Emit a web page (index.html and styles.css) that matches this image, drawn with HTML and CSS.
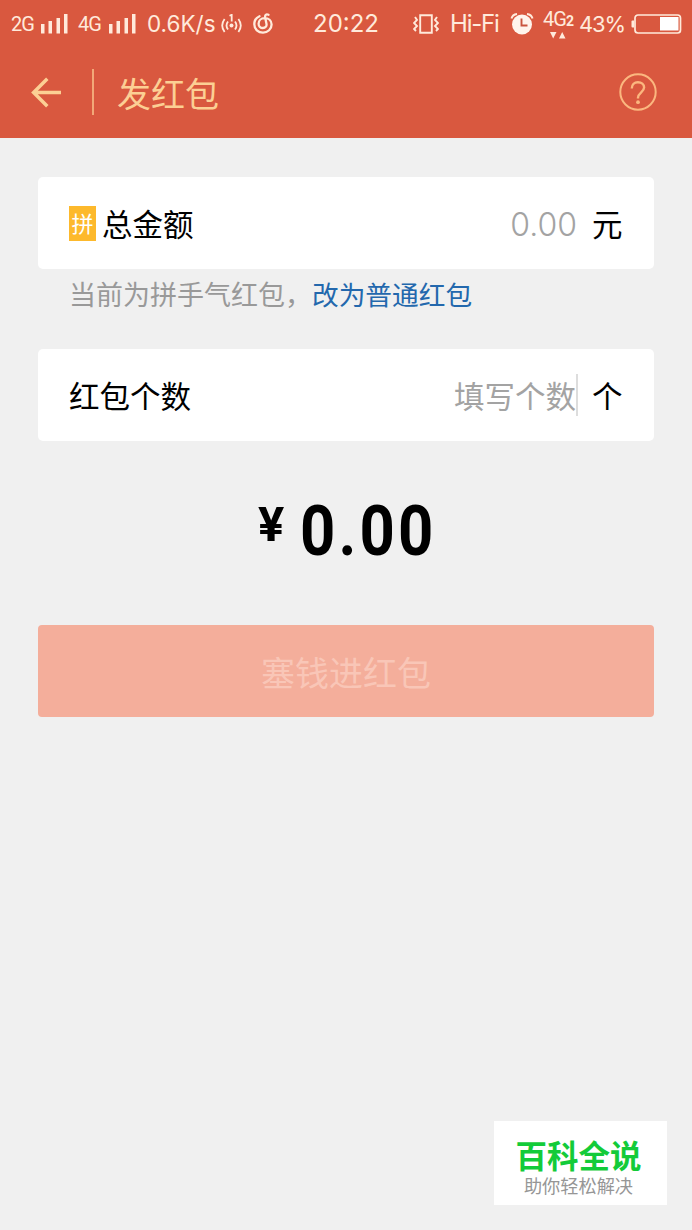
FILE: index.html
```html
<!DOCTYPE html>
<html lang="zh-CN">
<head>
<meta charset="utf-8">
<title>发红包</title>
<link rel="stylesheet" href="styles.css">
</head>
<body>
<div class="screen">
  <header class="header">
    <div class="status">
      <span class="net net-a">2G</span>
      <svg class="bars-a" width="28" height="20" viewBox="0 0 28 20" fill="currentColor"><path d="M1 10h3.500v9.500H1zM8.500 7H12v12.500H8.500zM16.500 4H20v15.500h-3.500zM24 0h3.500v19.500H24z"/></svg>
      <span class="net net-b">4G</span>
      <svg class="bars-b" width="28" height="20" viewBox="0 0 28 20" fill="currentColor"><path d="M1 10h3.500v9.500H1zM8.500 7H12v12.500H8.500zM16.500 4H20v15.500h-3.500zM24 0h3.500v19.500H24z"/></svg>
      <span class="speed">0.6K/s</span>
      <svg class="hotspot" width="22" height="20" viewBox="0 0 22 20" fill="none" stroke="currentColor" stroke-width="1.800"><circle cx="10.500" cy="11.500" r="2" fill="currentColor" stroke="none"/><path d="M8.500 1.800l2.200-1V7.500M7 7.500q-3 4 0 8M14 7.500q3 4 0 8M3.600 5q-4.800 6.500 0 13M17.400 5q4.800 6.500 0 13"/></svg>
      <svg class="music" width="20" height="21" viewBox="0 0 20 21" fill="none" stroke="currentColor" stroke-width="2.300" stroke-linecap="round"><path d="M6.500 3.200C3 4.700 1.300 8 1.300 11.300c0 4.900 3.900 8.300 8.700 8.300s8.600-3.500 8.600-8.100c0-3.900-3-6.400-7-6.400-3.500 0-6 2.500-6 5.600 0 2.600 1.900 4.300 4.300 4.300 2.500 0 4-1.800 3.600-4L12.200 4.500c-.5-2.500 1-3.700 3.300-2.700"/></svg>
      <span class="clock">20:22</span>
      <svg class="vibrate" width="26" height="20" viewBox="0 0 26 20" fill="none" stroke="currentColor" stroke-width="1.900"><path d="M7.200 1.200h11.600v17.600H7.200zM2 3l2 3-3 3 3 3-3 3 2 2M24 3l-2 3 3 3-3 3 3 3-2 2"/></svg>
      <span class="hifi">Hi-Fi</span>
      <svg class="alarm" width="24" height="22" viewBox="0 0 24 22"><circle cx="12" cy="11.500" r="10" fill="#fff4ec"/><path d="M1.500 5.500Q2.500 1.500 7 1M22.500 5.500Q21.500 1.500 17 1" fill="none" stroke="currentColor" stroke-width="2"/><path d="M11.500 5.500v7h6" fill="none" stroke="#c9553e" stroke-width="1.900"/></svg>
      <span class="data"><span class="data-label">4G<b>2</b></span><svg width="16" height="7" viewBox="0 0 16 7" fill="currentColor"><path d="M0 0h6.500L3.200 6.500zM9 6.500h6.500L12.200 0z"/></svg></span>
      <span class="percent">43%</span>
      <svg class="battery" width="51" height="20" viewBox="0 0 51 20"><rect x="4" y="1" width="45.500" height="18" rx="3" fill="none" stroke="currentColor" stroke-width="1.700"/><path d="M3 6.500H1.500q-1 0-1 1v5q0 1 1 1H3z" fill="currentColor"/><path d="M29 3h18.500v13.500H29z" fill="#fff"/></svg>
    </div>
    <div class="nav">
      <svg class="back" width="31" height="31" viewBox="0 0 31 31" fill="none" stroke="currentColor" stroke-width="3.500"><path d="M30 15.500H3M16.300 1.800L2.600 15.500l13.700 13.700"/></svg>
      <i class="divider"></i>
      <h1 class="title">发红包</h1>
      <svg class="help" width="38" height="38" viewBox="0 0 38 38" fill="none" stroke="currentColor"><circle cx="19" cy="19" r="17.700" stroke-width="2"/><path d="M12.800 15.500c0-3.900 2.600-6.200 6.100-6.200 3.600 0 6.200 2.200 6.200 5.300 0 4.500-6.100 5-6.100 10.200v.8" stroke-width="2.400"/><circle cx="19" cy="29.200" r="1.900" fill="currentColor" stroke="none"/></svg>
    </div>
  </header>
  <main class="content">
    <section class="card">
      <span class="badge">拼</span>
      <span class="label">总金额</span>
      <span class="amount">0.00</span>
      <span class="unit">元</span>
    </section>
    <p class="hint"><span>当前为拼手气红包，</span><a class="link">改为普通红包</a></p>
    <section class="card">
      <span class="label">红包个数</span>
      <span class="placeholder">填写个数</span>
      <i class="caret"></i>
      <span class="unit">个</span>
    </section>
    <div class="total"><span class="yen">¥</span><span class="sum">0.00</span></div>
    <div class="submit">塞钱进红包</div>
  </main>
  <aside class="watermark">
    <strong class="brand">百科全说</strong>
    <span class="slogan">助你轻松解决</span>
  </aside>
</div>
</body>
</html>
```
FILE: styles.css
```css
* { box-sizing: border-box; }
body { margin: 0; }
.screen {
  position: relative;
  width: 692px;
  height: 1230px;
  overflow: hidden;
  background: #f0f0f0;
  color: #000;
  font-family: "Noto Sans CJK SC", sans-serif;
}
.header { height: 138px; background: #d9583f; }
.status {
  display: flex;
  align-items: center;
  height: 47px;
  padding-left: 11px;
  color: #ffeadb;
  font-family: Inter, sans-serif;
  font-size: 23px;
  line-height: 28px;
  white-space: nowrap;
}
.status > * { flex: none; }
.net { width: 23px; font-family: Roboto, sans-serif; font-size: 20px; letter-spacing: -1px; }
.net-b { width: 24px; margin-left: 10px; }
.bars-a { margin-left: 6px; }
.bars-b { margin-left: 6px; }
.speed { width: 68px; margin-left: 11px; font-size: 22.5px; }
.hotspot { margin-left: 6px; }
.music { margin-left: 10px; }
.clock { width: 67px; margin-left: 40px; padding-top: 1px; font-size: 24px; }
.vibrate { margin-left: 33px; }
.hifi { width: 50px; margin-left: 11px; font-size: 24px; letter-spacing: -1.2px; }
.alarm { margin-left: 10px; }
.data { width: 34px; margin-left: 7px; display: flex; flex-direction: column; align-items: center; }
.data-label { font-family: Roboto, sans-serif; font-size: 20px; line-height: 22px; letter-spacing: -1px; }
.data-label b { font-size: 14px; }
.percent { width: 46px; margin-left: 4px; font-size: 22px; letter-spacing: -1.1px; }
.battery { margin-left: 6px; }
.nav {
  display: flex;
  align-items: center;
  height: 91px;
  padding: 0 35px 1px 31px;
  color: #fccf94;
}
.divider { width: 2px; height: 46px; margin-left: 30px; background: #f2a878; }
.title {
  margin: 0 auto 0 23px;
  padding-top: 1px;
  font-size: 34px;
  font-weight: 400;
  line-height: 48px;
}
.help { color: #fbb77f; }
.content { padding: 39px 38px 0; }
.card {
  display: flex;
  align-items: center;
  height: 92px;
  padding: 0 31.5px 0 31px;
  border-radius: 5px;
  background: #fff;
}
.badge {
  width: 27px;
  height: 35px;
  margin-right: 6px;
  background: #fdb92c;
  color: #fff;
  font-size: 22px;
  line-height: 33px;
  text-align: center;
}
.label, .unit, .placeholder { font-size: 30.5px; line-height: 44px; }
.label { margin-right: auto; }
.unit { margin-left: 15px; }
.amount {
  padding-top: 2px;
  color: #a3a3a3;
  font-family: Inter, sans-serif;
  font-size: 32px;
  font-weight: 300;
}
.placeholder { color: #a3a3a3; }
.caret { width: 2px; height: 42px; margin-right: -1px; background: #ddd; }
.hint {
  display: flex;
  height: 80px;
  margin: 0;
  padding: 6px 0 0 31px;
  color: #999;
  font-size: 27px;
  line-height: 38px;
}
.link { color: #2368ad; font-size: 26.7px; }
.total {
  display: flex;
  align-items: flex-start;
  height: 184px;
  padding: 49px 0 0 220px;
  font-family: Roboto, sans-serif;
}
.yen { width: 27px; font-size: 49px; line-height: 69px; font-weight: 700; }
.sum {
  margin-left: 15px;
  font-size: 70px;
  font-weight: 700;
  line-height: 82px;
  letter-spacing: 3.6px;
  transform: scaleX(.88);
  transform-origin: left;
}
.submit {
  height: 92px;
  border-radius: 4px;
  background: #f4ae9b;
  color: #f9c6b7;
  font-size: 34px;
  line-height: 94px;
  text-align: center;
}
.watermark {
  position: absolute;
  left: 494px;
  top: 1121px;
  display: flex;
  flex-direction: column;
  align-items: center;
  width: 173px;
  height: 84px;
  padding: 14px 4px 0 0;
  background: #fff;
}
.brand { color: #13cb39; font-size: 31.500px; font-weight: 700; line-height: 38px; }
.slogan { color: #969696; font-size: 18.200px; line-height: 24px; }
```
